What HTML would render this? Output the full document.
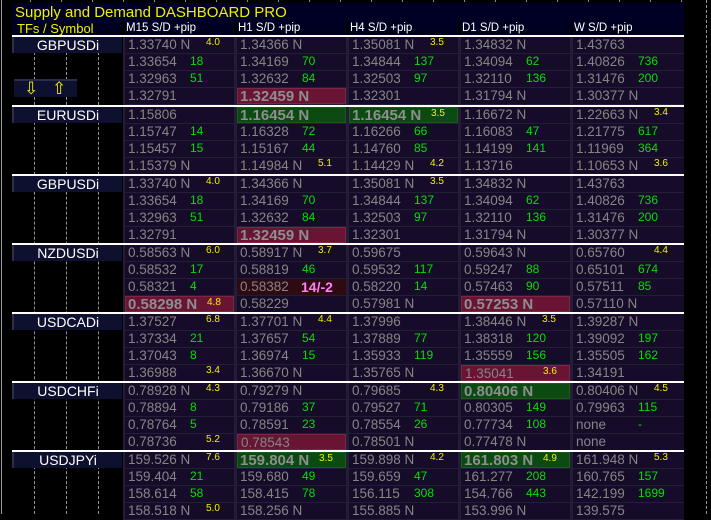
<!DOCTYPE html>
<html><head><meta charset="utf-8"><style>
*{margin:0;padding:0;box-sizing:border-box}
body{width:711px;height:514px;background:#000;position:relative;overflow:hidden;font-family:"Liberation Sans",sans-serif}
.vl{position:absolute;top:0;bottom:0;left:1px;width:1px;background:#9a9a9a}
.dash{position:absolute;width:0;border-left:1px dashed #8a95a5}
.tick{position:absolute;top:0;left:0;width:711px;height:2px;background:repeating-linear-gradient(90deg,transparent 0 30px,#888 30px 31px)}
.title{position:absolute;left:12px;top:3px;width:672px;height:19px;background:#000024;color:#f0f000;font-size:15px;line-height:19px;padding-left:3px}
.hd{position:absolute;top:22px;height:13px;background:#000020;color:#fff;font-size:11.5px;line-height:13px;padding-left:1px}
.wl{position:absolute;left:12px;width:672px;height:2px;background:#fff}
.b{position:absolute;left:0;width:711px;height:68px}
.bg{position:absolute;left:123px;top:0;width:561px;height:68px;background:#231d38}
.sym{position:absolute;left:12px;top:0;width:110px;height:16px;background:#0e1030;color:#fff;font-size:14px;line-height:16px;text-align:center;border-left:2px solid #2a2e4a}
.col{position:absolute;top:0;width:109px}
.col>div{height:16px;margin-bottom:1px;background:#170b2a;position:relative;color:#858585;font-size:13.5px;line-height:16px;padding-left:3px;white-space:nowrap}
.col1{left:125px}.col2{left:237px}.col3{left:349px}.col4{left:461px}.col5{left:573px;width:111px}
i{font-style:normal;font-weight:normal;position:absolute;left:65px;top:0;color:#00e000;font-size:12px;line-height:15px}
u{text-decoration:none;font-weight:normal;position:absolute;left:81px;top:-1px;color:#f0f000;font-size:10px;line-height:13px}
.r{background:#6a1434!important;border:1px solid #7e2444}
.g{background:#0b4a10!important;border:1px solid #1a5a1a}
.big{font-weight:bold;font-size:15px!important;color:#8e8e8e!important;padding-left:2px!important}
.dr{background:#2e0a12!important}
.pk{position:absolute;left:64px;top:0;color:#ff80ff;font-weight:bold;font-size:14px;line-height:16px}
.arr{position:absolute;left:14px;top:79px;width:63px;height:18px;background:#0e1030;border-top:2px solid #2a2e4a}
.arr span{position:absolute;top:-2px;font-size:17px;color:#f0f000}
</style></head><body>
<div class="tick"></div>
<div class="vl"></div>
<div class="dash" style="left:34px;top:52px;height:462px"></div>
<div class="dash" style="left:66px;top:52px;height:462px"></div>
<div class="dash" style="left:98px;top:52px;height:462px"></div>
<div class="dash" style="left:706px;top:0;height:514px"></div>
<div class="title">Supply and Demand DASHBOARD PRO</div>
<div class="hd" style="left:12px;width:109px;color:#f0f000;font-size:13px;padding-left:5px">TFs / Symbol</div>
<div class="hd" style="left:125px;width:109px">M15 S/D +pip</div>
<div class="hd" style="left:237px;width:109px">H1 S/D +pip</div>
<div class="hd" style="left:349px;width:109px">H4 S/D +pip</div>
<div class="hd" style="left:461px;width:109px">D1 S/D +pip</div>
<div class="hd" style="left:573px;width:111px">W S/D +pip</div>

<div class="wl" style="top:35px"></div>
<div class="b" style="top:37px"><div class="bg"></div><div class="sym">GBPUSDi</div>
<div class="col col1"><div>1.33740 N<u>4.0</u></div><div>1.33654<i>18</i></div><div>1.32963<i>51</i></div><div>1.32791</div></div>
<div class="col col2"><div>1.34366 N</div><div>1.34169<i>70</i></div><div>1.32632<i>84</i></div><div class="r big">1.32459 N</div></div>
<div class="col col3"><div>1.35081 N<u>3.5</u></div><div>1.34844<i>137</i></div><div>1.32503<i>97</i></div><div>1.32301</div></div>
<div class="col col4"><div>1.34832 N</div><div>1.34094<i>62</i></div><div>1.32110<i>136</i></div><div>1.31794 N</div></div>
<div class="col col5"><div>1.43763</div><div>1.40826<i>736</i></div><div>1.31476<i>200</i></div><div>1.30377 N</div></div>
</div>
<div class="arr"><span style="left:10px">⇩</span><span style="left:38px">⇧</span></div>

<div class="wl" style="top:105px"></div>
<div class="b" style="top:107px"><div class="bg"></div><div class="sym">EURUSDi</div>
<div class="col col1"><div>1.15806</div><div>1.15747<i>14</i></div><div>1.15457<i>15</i></div><div>1.15379 N</div></div>
<div class="col col2"><div class="g big">1.16454 N</div><div>1.16328<i>72</i></div><div>1.15167<i>44</i></div><div>1.14984 N<u>5.1</u></div></div>
<div class="col col3"><div class="g big">1.16454 N<u>3.5</u></div><div>1.16266<i>66</i></div><div>1.14760<i>85</i></div><div>1.14429 N<u>4.2</u></div></div>
<div class="col col4"><div>1.16672 N</div><div>1.16083<i>47</i></div><div>1.14199<i>141</i></div><div>1.13716</div></div>
<div class="col col5"><div>1.22663 N<u>3.4</u></div><div>1.21775<i>617</i></div><div>1.11969<i>364</i></div><div>1.10653 N<u>3.6</u></div></div>
</div>

<div class="wl" style="top:174px"></div>
<div class="b" style="top:176px"><div class="bg"></div><div class="sym">GBPUSDi</div>
<div class="col col1"><div>1.33740 N<u>4.0</u></div><div>1.33654<i>18</i></div><div>1.32963<i>51</i></div><div>1.32791</div></div>
<div class="col col2"><div>1.34366 N</div><div>1.34169<i>70</i></div><div>1.32632<i>84</i></div><div class="r big">1.32459 N</div></div>
<div class="col col3"><div>1.35081 N<u>3.5</u></div><div>1.34844<i>137</i></div><div>1.32503<i>97</i></div><div>1.32301</div></div>
<div class="col col4"><div>1.34832 N</div><div>1.34094<i>62</i></div><div>1.32110<i>136</i></div><div>1.31794 N</div></div>
<div class="col col5"><div>1.43763</div><div>1.40826<i>736</i></div><div>1.31476<i>200</i></div><div>1.30377 N</div></div>
</div>

<div class="wl" style="top:243px"></div>
<div class="b" style="top:245px"><div class="bg"></div><div class="sym">NZDUSDi</div>
<div class="col col1"><div>0.58563 N<u>6.0</u></div><div>0.58532<i>17</i></div><div>0.58321<i>4</i></div><div class="r big">0.58298 N<u>4.8</u></div></div>
<div class="col col2"><div>0.58917 N<u>3.7</u></div><div>0.58819<i>46</i></div><div class="dr">0.58382<span class="pk">14/-2</span></div><div>0.58229</div></div>
<div class="col col3"><div>0.59675</div><div>0.59532<i>117</i></div><div>0.58220<i>14</i></div><div>0.57981 N</div></div>
<div class="col col4"><div>0.59643 N</div><div>0.59247<i>88</i></div><div>0.57463<i>90</i></div><div class="r big">0.57253 N</div></div>
<div class="col col5"><div>0.65760<u>4.4</u></div><div>0.65101<i>674</i></div><div>0.57511<i>85</i></div><div>0.57110 N</div></div>
</div>

<div class="wl" style="top:312px"></div>
<div class="b" style="top:314px"><div class="bg"></div><div class="sym">USDCADi</div>
<div class="col col1"><div>1.37527<u>6.8</u></div><div>1.37334<i>21</i></div><div>1.37043<i>8</i></div><div>1.36988<u>3.4</u></div></div>
<div class="col col2"><div>1.37701 N<u>4.4</u></div><div>1.37657<i>54</i></div><div>1.36974<i>15</i></div><div>1.36670 N</div></div>
<div class="col col3"><div>1.37996</div><div>1.37889<i>77</i></div><div>1.35933<i>119</i></div><div>1.35765 N</div></div>
<div class="col col4"><div>1.38446 N<u>3.5</u></div><div>1.38318<i>120</i></div><div>1.35559<i>156</i></div><div class="r">1.35041<u>3.6</u></div></div>
<div class="col col5"><div>1.39287 N</div><div>1.39092<i>197</i></div><div>1.35505<i>162</i></div><div>1.34191</div></div>
</div>

<div class="wl" style="top:381px"></div>
<div class="b" style="top:383px"><div class="bg"></div><div class="sym">USDCHFi</div>
<div class="col col1"><div>0.78928 N<u>4.3</u></div><div>0.78894<i>8</i></div><div>0.78764<i>5</i></div><div>0.78736<u>5.2</u></div></div>
<div class="col col2"><div>0.79279 N</div><div>0.79186<i>37</i></div><div>0.78591<i>23</i></div><div class="r">0.78543</div></div>
<div class="col col3"><div>0.79685<u>4.3</u></div><div>0.79527<i>71</i></div><div>0.78554<i>26</i></div><div>0.78501 N</div></div>
<div class="col col4"><div class="g big">0.80406 N</div><div>0.80305<i>149</i></div><div>0.77734<i>108</i></div><div>0.77478 N</div></div>
<div class="col col5"><div>0.80406 N<u>4.5</u></div><div>0.79963<i>115</i></div><div>none<i>-</i></div><div>none</div></div>
</div>

<div class="wl" style="top:450px"></div>
<div class="b" style="top:452px"><div class="bg"></div><div class="sym">USDJPYi</div>
<div class="col col1"><div>159.526 N<u>7.6</u></div><div>159.404<i>21</i></div><div>158.614<i>58</i></div><div>158.518 N<u>5.0</u></div></div>
<div class="col col2"><div class="g big">159.804 N<u>3.5</u></div><div>159.680<i>49</i></div><div>158.415<i>78</i></div><div>158.256 N</div></div>
<div class="col col3"><div>159.898 N<u>4.2</u></div><div>159.659<i>47</i></div><div>156.115<i>308</i></div><div>155.885 N</div></div>
<div class="col col4"><div class="g big">161.803 N<u>4.9</u></div><div>161.277<i>208</i></div><div>154.766<i>443</i></div><div>153.996 N</div></div>
<div class="col col5"><div>161.948 N<u>5.3</u></div><div>160.765<i>157</i></div><div>142.199<i>1699</i></div><div>139.575</div></div>
</div>
</body></html>
